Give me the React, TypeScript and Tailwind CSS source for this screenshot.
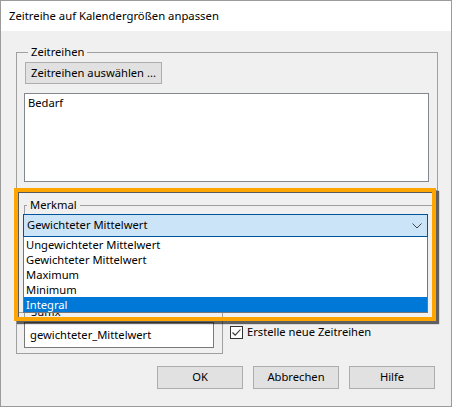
import { useState } from 'react';

const options = [
	'Ungewichteter Mittelwert',
	'Gewichteter Mittelwert',
	'Maximum',
	'Minimum',
	'Integral',
];

function DialogButton({ label }: { label: string }) {
	return (
		<button className="w-[86px] h-[23px] border border-[#adadad] bg-[#e1e1e1] flex items-center justify-center">
			{label}
		</button>
	);
}

export default function App() {
	const [selected] = useState('Integral');

	return (
		<div className="w-[452px] h-[407px] border border-[#9b9b9b] bg-[#f0f0f0] flex flex-col text-[11.2px] text-black font-['Noto_Sans',sans-serif]">
			{/* Title bar */}
			<div className="h-[30px] shrink-0 bg-white pl-[8px] flex items-center text-[11.3px]">
				Zeitreihe auf Kalendergrößen anpassen
			</div>

			<div className="flex flex-col pl-[15px] pr-[16px] pt-[13px]">
				{/* Zeitreihen */}
				<fieldset className="w-[419px] border border-[#a0a0a0] px-[8px] pb-[8px]">
					<legend className="ml-[3px] px-[3px] leading-[16px]">Zeitreihen</legend>
					<button className="mt-[2px] w-[137px] h-[22px] border border-[#adadad] bg-[#e1e1e1] flex items-center justify-center">
						Zeitreihen auswählen ...
					</button>
					<div className="mt-[9px] -ml-[1px] w-[405px] h-[89px] border border-[#828790] bg-white pl-[3px] pt-[1px] leading-[15px]">
						Bedarf
					</div>
				</fieldset>

				{/* Highlighted Merkmal combobox with open list */}
				<div className="relative z-10 -mt-[3px] -ml-[2px] -mb-[17px] w-[422px] h-[133px] shrink-0 border-4 border-[#ffa500] shadow-[3px_3px_1px_rgba(0,0,0,0.6)]">
					<div className="h-full border-t border-l border-[#5a5a5a] overflow-hidden">
						<fieldset className="mt-[4px] ml-[5px] w-[430px] border border-[#a0a0a0]">
							<legend className="ml-[2px] px-[3px] leading-[16px]">Merkmal</legend>
							<div className="relative mt-[1px] -ml-[2px] w-[405px]">
								<div className="h-[23px] border border-[#005499] bg-[#cce4f7] pl-[3px] pr-[4px] flex items-center justify-between">
									<span>Gewichteter Mittelwert</span>
									<svg width="10" height="6" viewBox="0 0 10 6" className="mr-[1px]">
										<polyline points="0.5,0.5 5,5 9.5,0.5" fill="none" stroke="#444" strokeWidth="1" />
									</svg>
								</div>
								<ul className="absolute left-0 top-full w-[405px] bg-white border-x border-b border-[#767676]">
									{options.map((o) => (
										<li
											key={o}
											className={
												o === selected
													? 'h-[15px] leading-[15px] pl-[2px] bg-[#0078d7] text-white'
													: 'h-[15px] leading-[15px] pl-[2px]'
											}
										>
											{o}
										</li>
									))}
								</ul>
							</div>
							<div className="h-[90px]" />
						</fieldset>
					</div>
				</div>

				{/* Suffix + checkbox */}
				<div className="flex">
					<fieldset className="w-[205px] border border-[#a0a0a0] px-[8px] pb-[5px]">
						<legend className="ml-[3px] px-[3px] leading-[16px]">Suffix</legend>
						<div className="mt-[2px] -ml-[1px] w-[190px] h-[26px] border border-[#7a7a7a] bg-white pl-[5px] flex items-center">
							gewichteter_Mittelwert
						</div>
					</fieldset>
					<label className="ml-[7px] mt-[22px] h-[13px] flex items-center gap-[4px] self-start">
						<span className="w-[13px] h-[13px] border border-[#333] bg-white flex items-center justify-center">
							<svg width="11" height="11" viewBox="0 0 11 11">
								<polyline points="1.5,5.5 4.2,8.2 9.5,2.5" fill="none" stroke="#333" strokeWidth="1.1" />
							</svg>
						</span>
						<span>Erstelle neue Zeitreihen</span>
					</label>
				</div>

				{/* Buttons */}
				<div className="mt-[12px] flex justify-end gap-[10px]">
					<DialogButton label="OK" />
					<DialogButton label="Abbrechen" />
					<DialogButton label="Hilfe" />
				</div>
			</div>
		</div>
	);
}
